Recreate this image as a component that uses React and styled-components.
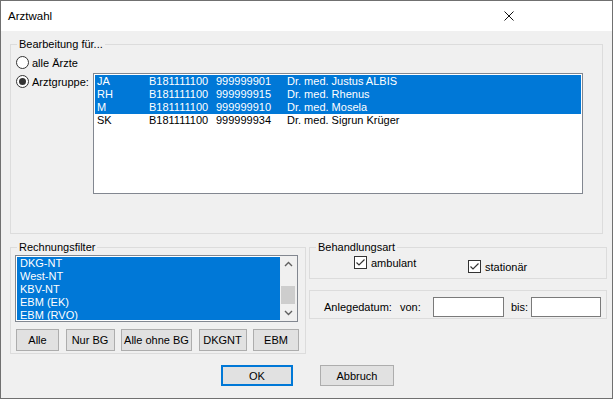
import styled, { createGlobalStyle } from "styled-components";

const GlobalStyle = createGlobalStyle`
  html, body { margin: 0; padding: 0; background: #ffffff; }
  * { box-sizing: border-box; }
`;

const doctors = [
  { kz: "JA", bsnr: "B181111100", lanr: "999999901", name: "Dr. med. Justus ALBIS", sel: true },
  { kz: "RH", bsnr: "B181111100", lanr: "999999915", name: "Dr. med. Rhenus", sel: true },
  { kz: "M", bsnr: "B181111100", lanr: "999999910", name: "Dr. med. Mosela", sel: true },
  { kz: "SK", bsnr: "B181111100", lanr: "999999934", name: "Dr. med. Sigrun Krüger", sel: false },
];

const filters = ["DKG-NT", "West-NT", "KBV-NT", "EBM (EK)", "EBM (RVO)"];

const filterButtons = [
  { label: "Alle", width: 43 },
  { label: "Nur BG", width: 49 },
  { label: "Alle ohne BG", width: 71 },
  { label: "DKGNT", width: 48 },
  { label: "EBM", width: 46 },
];

function App() {
  return (
    <>
      <GlobalStyle />
      <Window>
        <TitleBar>
          <span>Arztwahl</span>
          <CloseIcon viewBox="0 0 10 10">
            <path d="M0.5 0.5 L9.5 9.5 M9.5 0.5 L0.5 9.5" />
          </CloseIcon>
        </TitleBar>

        <Body>
          <Group $height={197} $right={4}>
            <Legend>Bearbeitung für...</Legend>
            <GroupContent $pad="4px 0 0 5px">
              <RadioRow>
                <Radio />
                <span>alle Ärzte</span>
              </RadioRow>
              <GroupRow>
                <RadioRow $width={77} $top={1}>
                  <Radio $checked />
                  <span>Arztgruppe:</span>
                </RadioRow>
                <ListBox $width={490} $height={121}>
                  {doctors.map((d) => (
                    <DoctorRow key={d.kz} $sel={d.sel}>
                      <span>{d.kz}</span>
                      <span>{d.bsnr}</span>
                      <span>{d.lanr}</span>
                      <span>{d.name}</span>
                    </DoctorRow>
                  ))}
                </ListBox>
              </GroupRow>
            </GroupContent>
          </Group>

          <BottomRow>
            <Group $height={114} $width={296}>
              <Legend>Rechnungsfilter</Legend>
              <GroupContent $pad="1px 6px 0 4px">
                <ListBox $width={283} $height={67} $flex>
                  <FilterItems>
                    {filters.map((f) => (
                      <FilterRow key={f}>{f}</FilterRow>
                    ))}
                  </FilterItems>
                  <ScrollBar>
                    <ScrollArrow viewBox="0 0 17 17">
                      <path d="M5 10 L8.5 6.5 L12 10" />
                    </ScrollArrow>
                    <Track>
                      <Thumb />
                    </Track>
                    <ScrollArrow viewBox="0 0 17 17">
                      <path d="M5 7 L8.5 10.5 L12 7" />
                    </ScrollArrow>
                  </ScrollBar>
                </ListBox>
                <ButtonRow>
                  {filterButtons.map((b) => (
                    <Button key={b.label} $width={b.width}>
                      {b.label}
                    </Button>
                  ))}
                </ButtonRow>
              </GroupContent>
            </Group>

            <RightColumn>
              <Group $height={39}>
                <Legend>Behandlungsart</Legend>
                <CheckRow>
                  <CheckItem $width={114}>
                    <CheckBox />
                    <span>ambulant</span>
                  </CheckItem>
                  <CheckItem $drop={4}>
                    <CheckBox />
                    <span>stationär</span>
                  </CheckItem>
                </CheckRow>
              </Group>

              <DateBox>
                <Label $width={76}>Anlegedatum:</Label>
                <Label $width={33}>von:</Label>
                <TextInput $width={71} />
                <Label $width={20} $left={7}>bis:</Label>
                <TextInput $width={70} />
              </DateBox>
            </RightColumn>
          </BottomRow>

          <Footer>
            <Button $width={72} $height={21} $default>OK</Button>
            <Button $width={74} $height={21}>Abbruch</Button>
          </Footer>
        </Body>
      </Window>
    </>
  );
}

function Radio({ $checked }) {
  return <RadioCircle>{$checked && <RadioDot />}</RadioCircle>;
}

function CheckBox() {
  return (
    <CheckSquare viewBox="0 0 13 13">
      <rect x="0.5" y="0.5" width="12" height="12" fill="#fff" stroke="#333" />
      <path d="M2.5 6.5 L5 9 L10.5 3.5" fill="none" stroke="#333" strokeWidth="1.2" />
    </CheckSquare>
  );
}

const Window = styled.div`
  width: 613px;
  height: 399px;
  display: flex;
  flex-direction: column;
  border: 1px solid #707070;
  background: #f0f0f0;
  font-family: "Liberation Sans", Arial, sans-serif;
  font-size: 11px;
  color: #000;
`;

const TitleBar = styled.div`
  height: 30px;
  flex: none;
  display: flex;
  align-items: center;
  justify-content: space-between;
  padding: 0 98px 0 7px;
  background: #ffffff;
  font-size: 11.5px;
`;

const CloseIcon = styled.svg`
  width: 10px;
  height: 10px;
  fill: none;
  stroke: #111;
  stroke-width: 1;
`;

const Body = styled.div`
  flex: 1;
  display: flex;
  flex-direction: column;
  padding: 6px 5px 0 9px;
`;

const Group = styled.fieldset`
  margin: 0 ${(p) => p.$right || 0}px 0 0;
  padding: 0;
  min-width: 0;
  height: ${(p) => p.$height}px;
  width: ${(p) => (p.$width ? `${p.$width}px` : "auto")};
  flex: none;
  border: 1px solid #dcdcdc;
`;

const Legend = styled.legend`
  margin-left: 6px;
  padding: 0 2px;
  line-height: 14px;
  font-size: 11px;
`;

const GroupContent = styled.div`
  display: flex;
  flex-direction: column;
  padding: ${(p) => p.$pad};
`;

const GroupRow = styled.div`
  display: flex;
  align-items: flex-start;
  margin-top: 3px;
`;

const RadioRow = styled.div`
  display: flex;
  align-items: center;
  gap: 3px;
  height: 15px;
  width: ${(p) => (p.$width ? `${p.$width}px` : "auto")};
  margin-top: ${(p) => p.$top || 0}px;
  flex: none;
`;

const RadioCircle = styled.span`
  width: 13px;
  height: 13px;
  border-radius: 50%;
  border: 1px solid #333;
  background: #fff;
  display: flex;
  align-items: center;
  justify-content: center;
  flex: none;
`;

const RadioDot = styled.span`
  width: 7px;
  height: 7px;
  border-radius: 50%;
  background: #333;
`;

const ListBox = styled.div`
  width: ${(p) => p.$width}px;
  height: ${(p) => p.$height}px;
  flex: none;
  border: 1px solid #828790;
  background: #fff;
  padding: 1px;
  display: ${(p) => (p.$flex ? "flex" : "block")};
  overflow: hidden;
`;

const DoctorRow = styled.div`
  display: grid;
  grid-template-columns: 52px 67px 71px 1fr;
  height: 13px;
  line-height: 13px;
  padding-left: 2px;
  white-space: nowrap;
  background: ${(p) => (p.$sel ? "#0078d7" : "transparent")};
  color: ${(p) => (p.$sel ? "#fff" : "#000")};
`;

const FilterItems = styled.div`
  flex: 1;
  background: #0078d7;
  color: #fff;
  overflow: hidden;
`;

const FilterRow = styled.div`
  height: 13px;
  line-height: 13px;
  padding-left: 3px;
  white-space: nowrap;
`;

const ScrollBar = styled.div`
  width: 17px;
  display: flex;
  flex-direction: column;
  background: #f0f0f0;
  margin: -1px -1px -1px 0;
`;

const ScrollArrow = styled.svg`
  width: 17px;
  height: 17px;
  flex: none;
  fill: none;
  stroke: #606060;
  stroke-width: 1.4;
`;

const Track = styled.div`
  flex: 1;
  display: flex;
  flex-direction: column;
  justify-content: flex-end;
  padding: 0 2px 0 1px;
`;

const Thumb = styled.div`
  height: 18px;
  background: #cdcdcd;
`;

const ButtonRow = styled.div`
  display: flex;
  justify-content: space-between;
  margin-top: 7px;
  padding-left: 1px;
`;

const Button = styled.button`
  width: ${(p) => p.$width}px;
  height: ${(p) => p.$height || 22}px;
  padding: 0;
  background: #e1e1e1;
  border: ${(p) => (p.$default ? "2px solid #0078d7" : "1px solid #adadad")};
  font-family: "Liberation Sans", Arial, sans-serif;
  font-size: 11px;
  color: #000;
  border-radius: 0;
`;

const BottomRow = styled.div`
  display: flex;
  gap: 3px;
  margin-top: 6px;
`;

const RightColumn = styled.div`
  flex: 1;
  display: flex;
  flex-direction: column;
`;

const CheckRow = styled.div`
  display: flex;
  align-items: flex-start;
  padding: 2px 0 0 44px;
`;

const CheckItem = styled.div`
  display: flex;
  align-items: center;
  gap: 4px;
  width: ${(p) => (p.$width ? `${p.$width}px` : "auto")};
  margin-top: ${(p) => p.$drop || 0}px;
`;

const CheckSquare = styled.svg`
  width: 13px;
  height: 13px;
  flex: none;
`;

const DateBox = styled.div`
  margin-top: 11px;
  height: 29px;
  display: flex;
  align-items: center;
  padding: 4px 0 0 14px;
  border: 1px solid #dcdcdc;
`;

const Label = styled.span`
  width: ${(p) => p.$width}px;
  margin-left: ${(p) => p.$left || 0}px;
  flex: none;
`;

const TextInput = styled.div`
  width: ${(p) => p.$width}px;
  height: 20px;
  flex: none;
  background: #fff;
  border: 1px solid #7a7a7a;
`;

const Footer = styled.div`
  display: flex;
  justify-content: center;
  gap: 27px;
  margin-top: 11px;
  padding-right: 2px;
`;

export default App;
